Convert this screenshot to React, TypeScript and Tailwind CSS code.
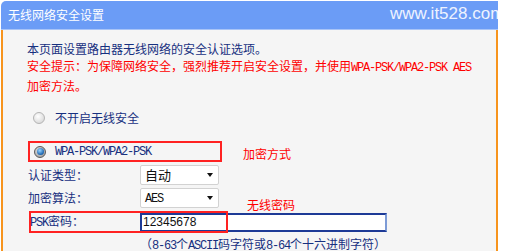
import React from 'react';

const cjk = { fontFamily: '"Noto Sans CJK SC", "Noto Sans", sans-serif' };

// half-width latin, 6px per char like the router page's bitmap font
function Mono({ children }: { children: React.ReactNode }) {
  return (
    <span className="font-['Liberation_Mono',monospace] text-[12px] tracking-[-1.2px]">{children}</span>
  );
}

function Radio({ checked }: { checked?: boolean }) {
  if (checked) {
    return (
      <span className="w-[12px] h-[12px] rounded-full border border-[#5a5a5a] bg-[radial-gradient(circle_at_40%_35%,#e8e8e8,#8f8f8f)] flex items-center justify-center shrink-0">
        <span className="w-[7px] h-[7px] rounded-full bg-[radial-gradient(circle_at_40%_35%,#9ad6ff,#1a64b0_70%,#0d3d70)]" />
      </span>
    );
  }
  return (
    <span className="w-[12px] h-[12px] rounded-full border border-[#b4b4b4] bg-[radial-gradient(circle_at_40%_35%,#ffffff,#cfcfcf)] shrink-0" />
  );
}

function Select({ children }: { children: React.ReactNode }) {
  return (
    <div className="w-[79px] h-[20px] bg-white border border-[#d2d2d2] rounded-[2px] flex items-center justify-between pl-[4px] pr-[5px] text-[13px] text-[#111]">
      <span>{children}</span>
      <span className="w-0 h-0 border-l-[3.5px] border-r-[3.5px] border-t-[4px] border-l-transparent border-r-transparent border-t-[#111]" />
    </div>
  );
}

export default function App() {
  return (
    <div className="w-[510px] h-[251px] bg-white overflow-hidden" style={cjk}>
      <div className="ml-[1px] w-[497px]">
        {/* title bar */}
        <div className="relative h-[29px] mt-[1px] rounded-tl-[5px] bg-[#6b9cf6] border-b border-[#a9c4f7] overflow-hidden flex items-center pl-[7px]">
          <span className="text-white text-[12px] leading-none">无线网络安全设置</span>
          <span className="absolute left-[389px] top-[4px] font-['Liberation_Sans',Arial,sans-serif] text-[17px] leading-[17px] text-[#eef3ff] whitespace-nowrap">
            www.it528.com
          </span>
        </div>

        <div className="h-[221px] bg-[#f5f5f5] border-l-2 border-r-2 border-[#f7941d] pl-[24px] pt-[10px] text-[12px]">
          <p className="leading-[17px] text-[#17307f]">本页面设置路由器无线网络的安全认证选项。</p>
          <p className="leading-[17px] text-[#ff0000]">
            安全提示：为保障网络安全，强烈推荐开启安全设置，并使用<Mono>WPA-PSK/WPA2-PSK AES</Mono>
            <br />
            加密方法。
          </p>

          <div className="mt-[12px] h-[23px] flex items-center pl-[6px] gap-[10px] text-[#17307f]">
            <Radio />
            <span>不开启无线安全</span>
          </div>

          <div className="mt-[12px] flex items-end">
            <div className="ml-[1px] w-[194px] h-[21px] border-2 border-[#f22] flex items-center pl-[4px] gap-[9px] text-[#17307f]">
              <Radio checked />
              <Mono>WPA-PSK/WPA2-PSK</Mono>
            </div>
            <span className="ml-[21px] leading-[17px] text-[#ff0000]">加密方式</span>
          </div>

          <div className="mt-[1px] ml-[1px] h-[23px] flex items-center">
            <span className="w-[112px] text-[#17307f]">认证类型：</span>
            <Select>自动</Select>
          </div>

          <div className="relative ml-[1px] h-[23px] flex items-center">
            <span className="w-[112px] text-[#17307f]">加密算法：</span>
            <Select>
              <Mono>AES</Mono>
            </Select>
            <span className="absolute left-[219px] top-[13px] leading-[12px] text-[#ff0000]">无线密码</span>
          </div>

          <div className="relative mt-[2px] ml-[1px] h-[22px] flex items-center">
            <span className="w-[112px] pl-[2px] text-[#17307f]">
              <Mono>PSK</Mono>密码：
            </span>
            <div className="w-[247px] h-[19px] bg-white border-2 border-[#1d3a96] border-r-[#7d9bd6] pl-[1px] flex items-center font-['Liberation_Sans',Arial,sans-serif] text-[12px] text-[#111]">
              12345678
            </div>
            <div className="absolute left-[1px] top-0 w-[199px] h-[22px] border-2 border-[#f22]" />
          </div>

          <p className="mt-[2px] ml-[113px] leading-[17px] text-[#17307f]">
            （<Mono>8-63</Mono>个<Mono>ASCII</Mono>码字符或<Mono>8-64</Mono>个十六进制字符）
          </p>
        </div>
      </div>
    </div>
  );
}
